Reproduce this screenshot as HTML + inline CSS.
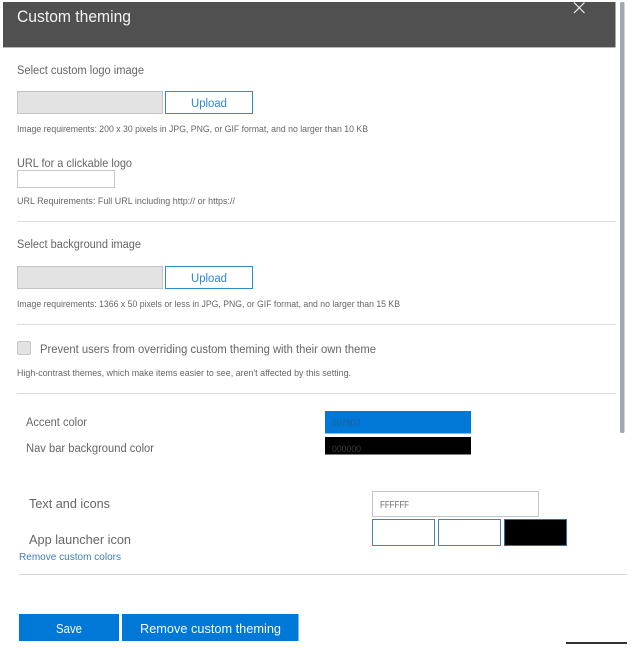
<!DOCTYPE html>
<html><head><meta charset="utf-8"><title>Custom theming</title>
<style>
html,body{margin:0;padding:0;background:#fff;width:633px;height:648px;overflow:hidden}
svg{display:block;font-family:"Liberation Sans",sans-serif}
text{fill:#666;filter:blur(.25px)}
</style></head><body>
<svg width="633" height="648" viewBox="0 0 633 648" xmlns="http://www.w3.org/2000/svg">
<rect x="0" y="0" width="633" height="648" fill="#fff"/>
<!-- header -->
<rect x="3" y="2" width="612.500" height="45" fill="#505050"/>
<rect x="3" y="47" width="612.500" height="1" fill="#b5b5b5"/>
<text x="17" y="22" font-size="17" style="fill:#f2f2f2" textLength="114" lengthAdjust="spacingAndGlyphs">Custom theming</text>
<path d="M574 2.500L584.500 13M584.500 2.500L574 13" stroke="#f0f0f0" stroke-width="1.200" fill="none"/>
<!-- scrollbar -->
<rect x="620" y="2" width="4.500" height="431" rx="1.500" fill="#a2a8ad"/>
<!-- logo -->
<text x="17" y="74" font-size="11.500" textLength="127" lengthAdjust="spacingAndGlyphs">Select custom logo image</text>
<rect x="17.500" y="91.500" width="145" height="22" fill="#e3e3e3" stroke="#c4c4c4"/>
<rect x="165.500" y="91.500" width="87" height="22" fill="#fff" stroke="#2f8bd0"/>
<text x="191" y="107" font-size="11.500" style="fill:#2b88d8" textLength="36" lengthAdjust="spacingAndGlyphs">Upload</text>
<text x="17" y="132" font-size="9" textLength="351" lengthAdjust="spacingAndGlyphs">Image requirements: 200 x 30 pixels in JPG, PNG, or GIF format, and no larger than 10 KB</text>
<text x="17" y="167" font-size="12" textLength="115" lengthAdjust="spacingAndGlyphs">URL for a clickable logo</text>
<rect x="17.500" y="170.500" width="97" height="17" fill="#fff" stroke="#c8c8c8"/>
<text x="17" y="204" font-size="9" textLength="218" lengthAdjust="spacingAndGlyphs">URL Requirements: Full URL including http:// or https://</text>
<rect x="17" y="221" width="599" height="1" fill="#dcdcdc"/>
<!-- background -->
<text x="17" y="248" font-size="11.500" textLength="124" lengthAdjust="spacingAndGlyphs">Select background image</text>
<rect x="17.500" y="266.500" width="145" height="22" fill="#e3e3e3" stroke="#c4c4c4"/>
<rect x="165.500" y="266.500" width="87" height="22" fill="#fff" stroke="#2f8bd0"/>
<text x="191" y="282" font-size="11.500" style="fill:#2b88d8" textLength="36" lengthAdjust="spacingAndGlyphs">Upload</text>
<text x="17" y="307" font-size="9" textLength="383" lengthAdjust="spacingAndGlyphs">Image requirements: 1366 x 50 pixels or less in JPG, PNG, or GIF format, and no larger than 15 KB</text>
<rect x="17" y="324" width="599" height="1" fill="#dcdcdc"/>
<!-- checkbox -->
<rect x="17.500" y="341.500" width="13" height="13" rx="1.500" fill="#e3e3e3" stroke="#c4c4c4"/>
<text x="40" y="353" font-size="11.500" textLength="336" lengthAdjust="spacingAndGlyphs">Prevent users from overriding custom theming with their own theme</text>
<text x="17" y="376" font-size="9" textLength="334" lengthAdjust="spacingAndGlyphs">High-contrast themes, which make items easier to see, aren't affected by this setting.</text>
<rect x="17" y="393" width="599" height="1" fill="#dcdcdc"/>
<!-- colours -->
<text x="26" y="426" font-size="11.500" textLength="61" lengthAdjust="spacingAndGlyphs">Accent color</text>
<text x="26" y="452" font-size="11.500" textLength="128" lengthAdjust="spacingAndGlyphs">Nav bar background color</text>
<rect x="325" y="411" width="146" height="22.500" fill="#0078d7"/>
<rect x="325" y="437" width="146" height="17.500" fill="#000"/>
<text x="332" y="426" font-size="9" style="fill:#1f5f96" textLength="29" lengthAdjust="spacingAndGlyphs">0078D7</text>
<text x="332" y="452" font-size="9" style="fill:#3c3c3c" textLength="29" lengthAdjust="spacingAndGlyphs">000000</text>
<text x="29" y="508" font-size="13" textLength="81" lengthAdjust="spacingAndGlyphs">Text and icons</text>
<text x="29" y="544" font-size="13" textLength="102" lengthAdjust="spacingAndGlyphs">App launcher icon</text>
<text x="19" y="560" font-size="10" style="fill:#3f7fb5" textLength="102" lengthAdjust="spacingAndGlyphs">Remove custom colors</text>
<rect x="372.500" y="491.500" width="166" height="25" fill="#fff" stroke="#c4c4c4"/>
<text x="380" y="508" font-size="10" style="fill:#6f6f6f" textLength="29" lengthAdjust="spacingAndGlyphs">FFFFFF</text>
<rect x="372.500" y="519.500" width="62" height="26" fill="#fff" stroke="#4b80b3"/>
<rect x="438.500" y="519.500" width="62" height="26" fill="#fff" stroke="#4b80b3"/>
<rect x="504.500" y="519.500" width="62" height="26" fill="#000" stroke="#2f6ea3"/>
<rect x="19" y="574" width="608" height="1" fill="#d6d6d6"/>
<!-- buttons -->
<rect x="19" y="614" width="100" height="27" fill="#0078d7"/>
<rect x="122" y="614" width="176.500" height="27" fill="#0078d7"/>
<text x="56" y="633" font-size="13" style="fill:#f5faff" textLength="26" lengthAdjust="spacingAndGlyphs">Save</text>
<text x="140" y="633" font-size="13" style="fill:#f5faff" textLength="141" lengthAdjust="spacingAndGlyphs">Remove custom theming</text>
<rect x="566" y="642" width="61" height="2" fill="#333"/>
</svg>
</body></html>
